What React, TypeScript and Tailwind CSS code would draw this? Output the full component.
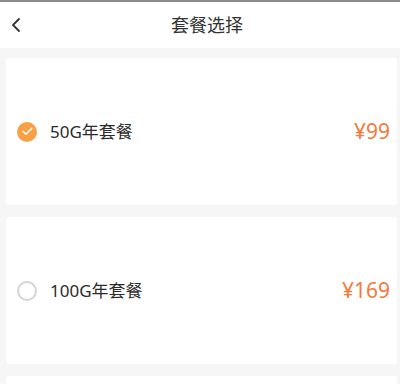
import { Check, ChevronLeft } from 'lucide-react';

const plans = [
  { name: '50G年套餐', price: '¥99', checked: true },
  { name: '100G年套餐', price: '¥169', checked: false },
];

export default function App() {
  return (
    <div className="w-[400px] h-[384px] overflow-hidden bg-[#f6f6f6] font-['Noto_Sans','Noto_Sans_CJK_SC',sans-serif]">
      {/* Header */}
      <div className="h-[48px] bg-white border-t-2 border-[#8a8a8a] flex items-center relative">
        <ChevronLeft className="absolute left-[4px] top-[11px] w-[24px] h-[24px] text-[#333]" strokeWidth={1.8} />
        <div className="flex-1 text-center pl-[14px] text-[18px] text-[#333] leading-none">套餐选择</div>
      </div>

      {/* Plans */}
      <div className="pt-[10px] pl-[6px] pr-[3px] flex flex-col gap-[12px]">
        {plans.map((p, idx) => (
          <div key={idx} className="h-[147px] shrink-0 bg-white rounded-[3px] flex items-center pl-[11px] pr-[7px]">
            {p.checked ? (
              <div className="w-[20px] h-[20px] rounded-full bg-[#f8a045] flex items-center justify-center">
                <Check className="w-[13px] h-[13px] text-white" strokeWidth={3} />
              </div>
            ) : (
              <div className="w-[20px] h-[20px] rounded-full border-2 border-[#d4d4d4] box-border" />
            )}
            <span className="ml-[13px] text-[17px] text-[#2b2b2b]">{p.name}</span>
            <span className="ml-auto text-[21px] text-[#f47a3c]">{p.price}</span>
          </div>
        ))}
        {/* next card, cut off by the viewport */}
        <div className="h-[147px] shrink-0 bg-white rounded-[3px]" />
      </div>
    </div>
  );
}
